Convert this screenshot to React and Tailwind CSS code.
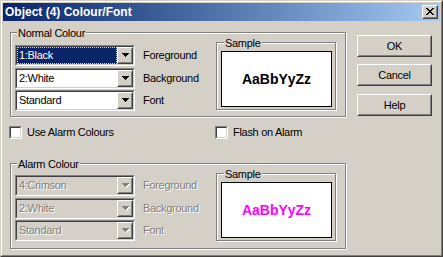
import React from "react";

function Raised({ className = "", inner = "", children }) {
  return (
    <div className={`border border-t-white border-l-white border-r-[#404040] border-b-[#404040] ${className}`}>
      <div className={`w-full h-full border border-t-[#d4d0c8] border-l-[#d4d0c8] border-r-[#808080] border-b-[#808080] bg-[#d4d0c8] flex ${inner}`}>
        {children}
      </div>
    </div>
  );
}

function Arrow({ disabled }) {
  const d = "M0 0h7v1H0zM1 1h5v1H1zM2 2h3v1H2zM3 3h1v1H3z";
  return (
    <svg width="8" height="5" viewBox="0 0 8 5" shapeRendering="crispEdges">
      {disabled && <path d={d} fill="#ffffff" transform="translate(1 1)" />}
      <path d={d} fill={disabled ? "#808080" : "#000000"} />
    </svg>
  );
}

function Combo({ text, selected, disabled }) {
  return (
    <div className="h-[21px] w-[120px] border border-t-[#808080] border-l-[#808080] border-r-white border-b-white">
      <div
        className={`h-full flex border border-t-[#404040] border-l-[#404040] border-r-[#d4d0c8] border-b-[#d4d0c8] ${
          disabled ? "bg-[#d4d0c8]" : "bg-white"
        }`}
      >
        {selected ? (
          <div className="flex-1 bg-[#0a246a] text-white border border-dotted border-[#f0d080] flex items-center pl-px leading-[13px]">
            {text}
          </div>
        ) : (
          <div
            className={`flex-1 flex items-center pl-[2px] leading-[13px] ${
              disabled ? "text-[#808080] [text-shadow:1px_1px_0_#ffffff]" : "text-black"
            }`}
          >
            {text}
          </div>
        )}
        <Raised className="w-[16px] h-full" inner="items-center justify-center pl-px">
          <Arrow disabled={disabled} />
        </Raised>
      </div>
    </div>
  );
}

function Label({ children, disabled }) {
  return (
    <div
      className={`ml-[8px] w-[73px] leading-[13px] ${
        disabled ? "text-[#808080] [text-shadow:1px_1px_0_#ffffff]" : ""
      }`}
    >
      {children}
    </div>
  );
}

function Checkbox() {
  return (
    <div className="w-[13px] h-[13px] border border-t-[#808080] border-l-[#808080] border-r-white border-b-white">
      <div className="w-full h-full border border-t-[#404040] border-l-[#404040] border-r-[#d4d0c8] border-b-[#d4d0c8] bg-white" />
    </div>
  );
}

function Group({ title, rows, disabled, sampleColor, heightClass, rowsTop }) {
  return (
    <div
      className={`relative ml-px w-[336px] ${heightClass} border border-[#808080] shadow-[inset_1px_1px_0_#ffffff,1px_1px_0_#ffffff] flex pl-[4px] pt-[9px]`}
    >
      <div className="absolute left-[6px] top-[-6px] px-px bg-[#d4d0c8] leading-[13px]">{title}</div>
      <div className={`flex flex-col ${rowsTop}`}>
        {rows.map((r, i) => (
          <div
            key={r.label}
            className={`flex items-center h-[21px] ${i === 1 ? "mt-[2px]" : i === 2 ? "mt-px" : ""}`}
          >
            <Combo text={r.text} selected={r.selected} disabled={disabled} />
            <Label disabled={disabled}>{r.label}</Label>
          </div>
        ))}
      </div>
      <div className="relative w-[120px] h-[68px] border border-[#808080] shadow-[inset_1px_1px_0_#ffffff,1px_1px_0_#ffffff] pl-[4px] pt-[8px]">
        <div className="absolute left-[7px] top-[-6px] px-px bg-[#d4d0c8] leading-[13px]">Sample</div>
        <div className="w-[111px] h-[56px] border border-black bg-white flex items-center justify-center">
          <span className={`font-bold text-[14px] tracking-normal leading-[16px] ${sampleColor}`}>AaBbYyZz</span>
        </div>
      </div>
    </div>
  );
}

function Button({ children, className = "" }) {
  return (
    <Raised className={`w-[75px] h-[22px] ${className}`} inner="items-center justify-center">
      <span className="leading-[13px]">{children}</span>
    </Raised>
  );
}

export default function App() {
  return (
    <div className="w-[443px] h-[257px] overflow-hidden bg-[#d4d0c8] border border-t-[#d4d0c8] border-l-[#d4d0c8] border-r-[#404040] border-b-[#404040] font-['Liberation_Sans',Arial,sans-serif] text-[11px] tracking-[-0.3px] text-black">
      <div className="w-full h-full border border-t-white border-l-white border-r-[#808080] border-b-[#808080] p-px flex flex-col">
        {/* Title bar */}
        <div className="h-[18px] flex items-center justify-between bg-gradient-to-r from-[#0a246a] to-[#a6caf0]">
          <span className="pl-[2px] text-white font-bold text-[12px] tracking-normal leading-[14px]">
            Object (4) Colour/Font
          </span>
          <Raised className="mr-[2px] w-[16px] h-[14px]" inner="items-start justify-start pl-[2px] pt-px">
            <svg width="8" height="7" viewBox="0 0 8 7" shapeRendering="crispEdges">
              <path
                d="M0 0h2v1H0zM6 0h2v1H6zM1 1h2v1H1zM5 1h2v1H5zM2 2h4v1H2zM3 3h2v1H3zM2 4h4v1H2zM1 5h2v1H1zM5 5h2v1H5zM0 6h2v1H0zM6 6h2v1H6z"
                fill="#000000"
              />
            </svg>
          </Raised>
        </div>

        {/* Body */}
        <div className="flex pl-[6px]">
          <div className="w-[337px] flex flex-col">
            <div className="mt-[11px]">
              <Group
                title="Normal Colour"
                heightClass="h-[85px]"
                rowsTop="mt-[3px]"
                sampleColor="text-black"
                rows={[
                  { text: "1:Black", label: "Foreground", selected: true },
                  { text: "2:White", label: "Background" },
                  { text: "Standard", label: "Font" },
                ]}
              />
            </div>

            <div className="mt-[9px] h-[13px] flex items-center">
              <div className="w-[206px] flex items-center">
                <Checkbox />
                <span className="ml-[5px] leading-[13px]">Use Alarm Colours</span>
              </div>
              <div className="flex items-center">
                <Checkbox />
                <span className="ml-[5px] leading-[13px]">Flash on Alarm</span>
              </div>
            </div>

            <div className="mt-[24px]">
              <Group
                title="Alarm Colour"
                heightClass="h-[86px]"
                rowsTop="mt-[2px]"
                disabled
                sampleColor="text-[#ff00ff]"
                rows={[
                  { text: "4:Crimson", label: "Foreground" },
                  { text: "2:White", label: "Background" },
                  { text: "Standard", label: "Font" },
                ]}
              />
            </div>
          </div>

          <div className="ml-[11px] mt-[14px] flex flex-col">
            <Button>OK</Button>
            <Button className="mt-[7px]">Cancel</Button>
            <Button className="mt-[8px]">Help</Button>
          </div>
        </div>
      </div>
    </div>
  );
}
